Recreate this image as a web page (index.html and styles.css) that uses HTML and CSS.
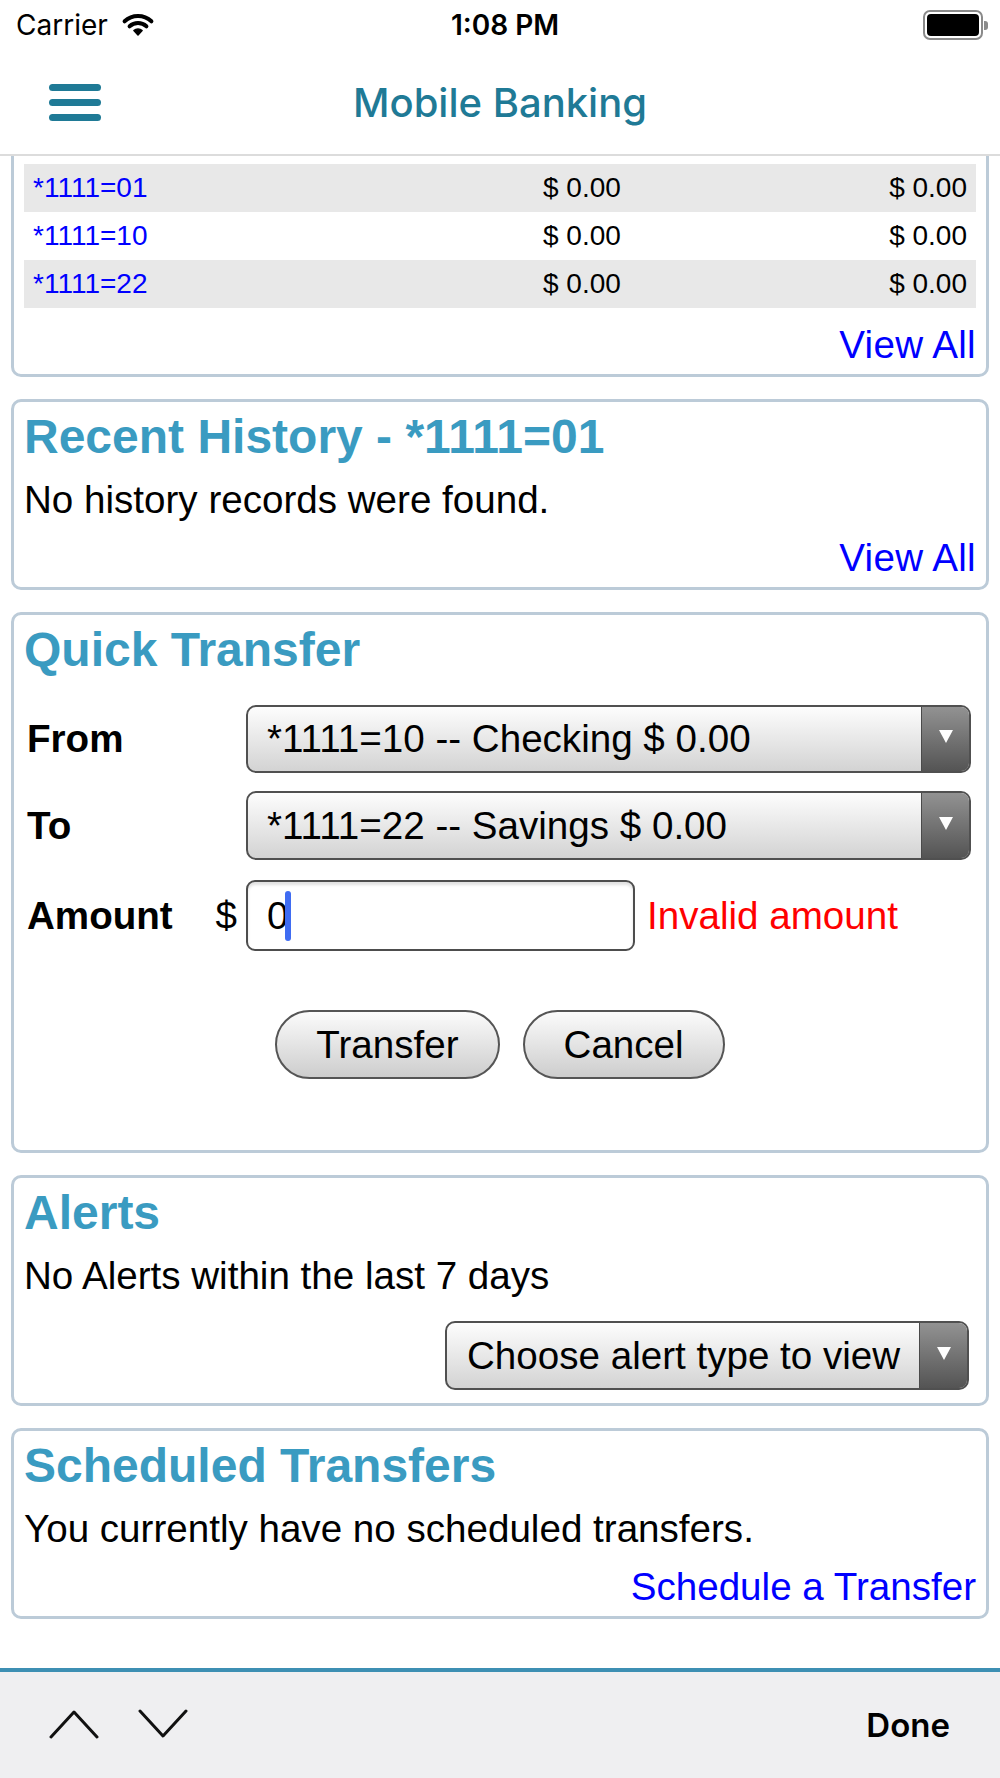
FILE: index.html
```html
<!DOCTYPE html>
<html lang="en">
<head>
  <meta charset="UTF-8" />
  <meta name="viewport" content="width=device-width, initial-scale=1" />
  <title>Mobile Banking</title>
  <link rel="stylesheet" href="styles.css">
</head>
<body>

<div class="status-bar">
  <div class="status-left">
    <span>Carrier</span>
    <svg class="wifi" width="36" height="26" viewBox="0 0 36 26">
      <path d="M18 24 L13.9 19.6 A6 6 0 0 1 22.1 19.6 Z" fill="#000" stroke="#000" stroke-width="1.5" stroke-linejoin="round"/>
      <path d="M9.6 15.3 A12.5 12.5 0 0 1 26.4 15.3" fill="none" stroke="#000" stroke-width="4" stroke-linecap="round"/>
      <path d="M4.6 10.3 A19.5 19.5 0 0 1 31.4 10.3" fill="none" stroke="#000" stroke-width="4" stroke-linecap="round"/>
    </svg>
  </div>
  <div class="status-time">1:08 PM</div>
  <div class="status-right">
    <span class="battery"><span class="battery-fill"></span></span>
    <span class="battery-nub"></span>
  </div>
</div>

<header class="nav">
  <div class="menu-btn">
    <span></span><span></span><span></span>
  </div>
  <h1>Mobile Banking</h1>
</header>

<main class="content">

  <section class="card card-scrolled">
    <table class="accounts">
      <colgroup>
        <col style="width: 510px">
        <col style="width: 221px">
        <col>
      </colgroup>
      <tr><td><a href="#">*1111=01</a></td><td>$ 0.00</td><td class="num">$ 0.00</td></tr>
      <tr><td><a href="#">*1111=10</a></td><td>$ 0.00</td><td class="num">$ 0.00</td></tr>
      <tr><td><a href="#">*1111=22</a></td><td>$ 0.00</td><td class="num">$ 0.00</td></tr>
    </table>
    <div class="more-link"><a href="#" class="view-all">View All</a></div>
  </section>

  <section class="card">
    <h2>Recent History - *1111=01</h2>
    <p>No history records were found.</p>
    <div class="more-link"><a href="#" class="view-all">View All</a></div>
  </section>

  <section class="card">
    <h2>Quick Transfer</h2>
    <div class="form-row row-from">
      <label>From</label>
      <div class="picker">
        <span class="picker-value">*1111=10 -- Checking $ 0.00</span>
        <span class="picker-arrow"><svg width="14" height="13" viewBox="0 0 14 13"><path d="M0 0 H14 L7 13 Z" fill="#fff"/></svg></span>
      </div>
    </div>
    <div class="form-row row-to">
      <label>To</label>
      <div class="picker">
        <span class="picker-value">*1111=22 -- Savings $ 0.00</span>
        <span class="picker-arrow"><svg width="14" height="13" viewBox="0 0 14 13"><path d="M0 0 H14 L7 13 Z" fill="#fff"/></svg></span>
      </div>
    </div>
    <div class="form-row row-amount">
      <label>Amount <span class="currency">$</span></label>
      <div class="amount-wrap">
        <div class="field">0<span class="caret"></span></div>
        <span class="error">Invalid amount</span>
      </div>
    </div>
    <div class="actions">
      <button>Transfer</button>
      <button>Cancel</button>
    </div>
  </section>

  <section class="card">
    <h2>Alerts</h2>
    <p>No Alerts within the last 7 days</p>
    <div class="alert-filter">
      <div class="picker picker-alerts">
        <span class="picker-value">Choose alert type to view</span>
        <span class="picker-arrow"><svg width="14" height="13" viewBox="0 0 14 13"><path d="M0 0 H14 L7 13 Z" fill="#fff"/></svg></span>
      </div>
    </div>
  </section>

  <section class="card">
    <h2>Scheduled Transfers</h2>
    <p>You currently have no scheduled transfers.</p>
    <div class="more-link"><a href="#">Schedule a Transfer</a></div>
  </section>

</main>

<footer class="toolbar">
  <div class="toolbar-arrows">
    <svg width="50" height="30" viewBox="0 0 50 30"><polyline points="2,28 25,3 48,28" fill="none" stroke="#111" stroke-width="3" stroke-linecap="round" stroke-linejoin="round"/></svg>
    <svg width="50" height="30" viewBox="0 0 50 30"><polyline points="2,2 25,27 48,2" fill="none" stroke="#111" stroke-width="3" stroke-linecap="round" stroke-linejoin="round"/></svg>
  </div>
  <span class="done">Done</span>
</footer>

</body>
</html>
```

FILE: styles.css
```css
html, body {
  margin: 0;
  padding: 0;
}
body {
  width: 1000px;
  height: 1778px;
  display: flex;
  flex-direction: column;
  background: #fff;
  color: #000;
  font-family: "Liberation Sans", Arial, sans-serif;
  font-size: 38.6px;
  overflow: hidden;
}

/* status bar */
.status-bar {
  height: 50px;
  display: flex;
  align-items: center;
  justify-content: space-between;
  padding: 0 12px 0 16px;
  font-family: Inter, "Noto Sans", sans-serif;
  font-size: 28px;
}
.status-left {
  display: flex;
  align-items: center;
  gap: 12px;
  width: 200px;
}
.wifi {
  margin-top: -2px;
}
.status-time {
  font-weight: 600;
  margin-left: 6px;
}
.status-right {
  width: 200px;
  display: flex;
  justify-content: flex-end;
  align-items: center;
}
.battery {
  width: 52px;
  height: 22px;
  border: 2px solid #8a8a8a;
  border-radius: 7px;
  padding: 2px;
  box-sizing: content-box;
  display: flex;
}
.battery-fill {
  flex: 1;
  background: #000;
  border-radius: 4px;
}
.battery-nub {
  width: 4px;
  height: 9px;
  background: #8a8a8a;
  border-radius: 0 3px 3px 0;
  margin-left: 1px;
}

/* nav */
.nav {
  height: 104px;
  border-bottom: 2px solid #dcdcdc;
  display: flex;
  align-items: center;
}
.menu-btn {
  margin-left: 49px;
  width: 52px;
  display: flex;
  flex-direction: column;
  gap: 8px;
}
.menu-btn span {
  height: 7px;
  background: #1f7a96;
  border-radius: 4px;
}
.nav h1 {
  flex: 1;
  margin: 0 101px 0 0;
  text-align: center;
  font-family: Inter, "Noto Sans", sans-serif;
  font-weight: 500;
  font-size: 40px;
  color: #1f7a96;
}

/* content */
.content {
  flex: 1;
  overflow: hidden;
}
.card {
  margin: 22px 11px 0;
  border: 3px solid #bccbd8;
  border-radius: 10px;
  padding: 9px 10px 7px;
}
.card-scrolled {
  margin-top: -40px;
  padding-top: 45px;
}
.card h2 {
  margin: 0;
  font-size: 48px;
  line-height: 52px;
  font-weight: bold;
  color: #3a9bc1;
}
.card p {
  margin: 15px 0 0;
  line-height: 44px;
}
a {
  color: #0000ff;
  text-decoration: none;
}
.more-link {
  margin-top: 14px;
  text-align: right;
  line-height: 44px;
}
.view-all {
  letter-spacing: 0.3px;
}
.card-scrolled .more-link {
  margin-top: 15px;
}

.accounts {
  width: 100%;
  border-collapse: collapse;
  table-layout: fixed;
  font-size: 28px;
}
.accounts td {
  height: 48px;
  padding: 0 9px;
  white-space: nowrap;
}
.accounts tr:nth-child(odd) {
  background: #e8e8e8;
}
.accounts td.num {
  text-align: right;
}

/* quick transfer form */
.form-row {
  display: grid;
  grid-template-columns: 222px 1fr;
  align-items: center;
  margin-right: 5px;
}
.form-row label {
  font-weight: bold;
  padding-left: 3px;
  display: flex;
  justify-content: space-between;
  padding-right: 9px;
}
.currency {
  font-weight: normal;
}
.row-from {
  margin-top: 29px;
}
.row-to {
  margin-top: 18px;
}
.row-amount {
  margin-top: 20px;
}

.picker {
  height: 68px;
  box-sizing: border-box;
  border: 2px solid #505050;
  border-radius: 10px;
  background: linear-gradient(#fdfdfd, #d3d3d3);
  display: flex;
  align-items: center;
  overflow: hidden;
}
.picker-value {
  flex: 1;
  padding-left: 19px;
  white-space: nowrap;
}
.picker-arrow {
  width: 48px;
  align-self: stretch;
  background: linear-gradient(#929292, #545454);
  border-left: 1px solid #4a4a4a;
  display: flex;
  align-items: center;
  justify-content: center;
  padding-bottom: 5px;
  box-sizing: border-box;
}
.row-to .picker {
  height: 69px;
}

.amount-wrap {
  display: flex;
  align-items: center;
}
.field {
  width: 389px;
  height: 71px;
  box-sizing: border-box;
  border: 2px solid #4d4d4d;
  border-radius: 9px;
  background: #fff;
  box-shadow: inset 0 3px 3px rgba(0, 0, 0, 0.12);
  padding-left: 19px;
  display: flex;
  align-items: center;
}
.caret {
  display: inline-block;
  width: 6px;
  height: 50px;
  background: #3f6cf2;
  border-radius: 3px;
  margin-left: -3px;
}
.error {
  color: #ff0000;
  margin-left: 12px;
}

.actions {
  display: flex;
  justify-content: center;
  gap: 23px;
  margin: 59px 0 64px;
}
.actions button {
  height: 69px;
  padding: 0 39px;
  border: 2px solid #555;
  border-radius: 35px;
  background: linear-gradient(#fbfbfb, #cdcdcd);
  font-family: "Liberation Sans", Arial, sans-serif;
  font-size: 38.6px;
  color: #000;
}

/* alerts */
.alert-filter {
  display: flex;
  justify-content: flex-end;
  margin: 23px 7px 6px 0;
}
.picker-alerts {
  width: 524px;
  height: 69px;
}
.picker-alerts .picker-value {
  padding-left: 20px;
}

/* bottom keyboard toolbar */
.toolbar {
  height: 106px;
  border-top: 4px solid #3d8fb3;
  background: #efeff1;
  display: flex;
  align-items: center;
  justify-content: space-between;
  padding: 0 50px 0 49px;
}
.toolbar-arrows {
  display: flex;
  gap: 39px;
  margin-top: -3px;
}
.done {
  font-family: Inter, "Noto Sans", sans-serif;
  font-weight: 600;
  font-size: 33px;
}
```
